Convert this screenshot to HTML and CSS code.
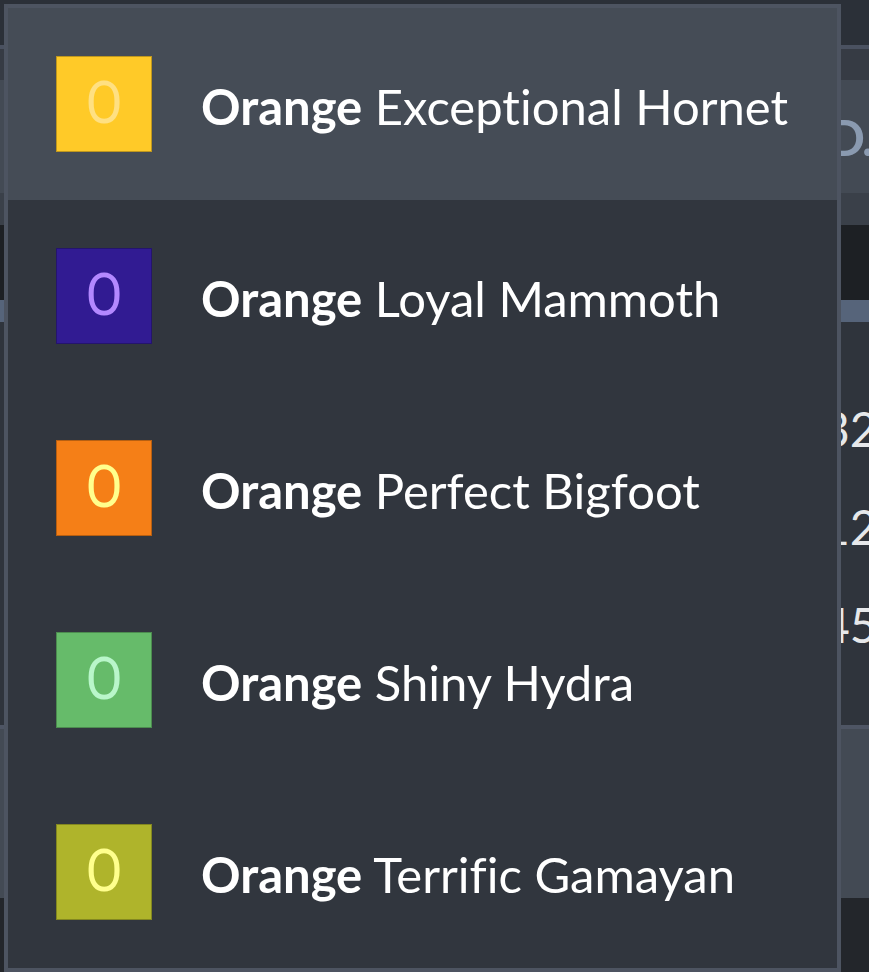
FILE: index.html
```html
<!DOCTYPE html>
<html lang="en">
<head>
<meta charset="utf-8">
<title>Dropdown</title>
<link rel="stylesheet" href="styles.css">
</head>
<body>
<div class="page">
  <div class="topbar"></div>
  <div class="topline"></div>
  <div class="subbar"></div>
  <div class="titlebar"><span class="title">D.</span></div>
  <div class="toolbar"></div>
  <div class="darkbar"></div>
  <div class="headline"></div>
  <div class="tbody">
    <div class="trow"><span class="num">32</span></div>
    <div class="trow"><span class="num">12</span></div>
    <div class="trow"><span class="num">45</span></div>
  </div>
  <div class="footline"></div>
  <div class="footer"></div>
  <div class="bottom"></div>
</div>

<ul class="menu">
  <li class="item active">
    <span class="swatch amber"><span class="glyph">O</span></span>
    <span class="label"><b>Orange</b> Exceptional Hornet</span>
  </li>
  <li class="item">
    <span class="swatch purple"><span class="glyph">O</span></span>
    <span class="label"><b>Orange</b> Loyal Mammoth</span>
  </li>
  <li class="item">
    <span class="swatch orange"><span class="glyph">O</span></span>
    <span class="label"><b>Orange</b> Perfect Bigfoot</span>
  </li>
  <li class="item">
    <span class="swatch green"><span class="glyph">O</span></span>
    <span class="label"><b>Orange</b> Shiny Hydra</span>
  </li>
  <li class="item">
    <span class="swatch lime"><span class="glyph">O</span></span>
    <span class="label"><b>Orange</b> Terrific Gamayan</span>
  </li>
</ul>
</body>
</html>
```

FILE: styles.css
```css
html, body {
  margin: 0;
  padding: 0;
  height: 100%;
  overflow: hidden;
  background: #23262b;
}

body {
  position: relative;
  font-family: "Lato", "Open Sans", sans-serif;
  font-variant-ligatures: none;
}

.page {
  display: flex;
  flex-direction: column;
  width: 100%;
}

.topbar { height: 45px; background: #2b3038; }
.topline { height: 4px; background: #4a5160; }
.subbar { height: 31px; background: #363b44; }
.titlebar {
  height: 113px;
  background: #434a54;
  display: flex;
  align-items: center;
  padding-left: 827px;
  white-space: nowrap;
  overflow: hidden;
}
.title {
  font-weight: 700;
  font-size: 50px;
  letter-spacing: -2px;
  color: #8a9ab0;
}
.toolbar { height: 32px; background: #3a4049; }
.darkbar { height: 75px; background: #1d2024; }
.headline { height: 22px; background: #56647a; }

.tbody {
  background: #2f343c;
  padding: 57px 0 52px;
  display: flex;
  flex-direction: column;
}
.trow {
  height: 98px;
  display: flex;
  align-items: center;
  padding-left: 822px;
  white-space: nowrap;
  overflow: hidden;
}
.num {
  font-size: 48px;
  color: #e6e8ea;
  font-weight: 400;
}

.footline { height: 4px; background: #4e5564; }
.footer { height: 169px; background: #434a54; }
.bottom { height: 80px; background: #23262b; }

.menu {
  position: absolute;
  left: 4px;
  top: 4px;
  width: 829px;
  margin: 0;
  padding: 0;
  list-style: none;
  border: 4px solid #4d5461;
  background: #31363e;
}

.item {
  height: 192px;
  box-sizing: border-box;
  padding: 0 48px;
  display: flex;
  align-items: center;
  gap: 49px;
}
.item.active { background: #454c56; }

.swatch {
  flex: none;
  width: 96px;
  height: 96px;
  box-sizing: border-box;
  border: 1px solid rgba(0, 0, 0, 0.25);
  display: flex;
  align-items: center;
  justify-content: center;
  font-family: "Roboto", sans-serif;
  font-weight: 400;
  font-size: 54px;
  line-height: 1;
}
.glyph {
  display: block;
  transform: scaleY(1.08);
}
.amber { background: #ffca28; color: #ffe082; }
.purple { background: #311b92; color: #b388ff; }
.orange { background: #f57f17; color: #ffff8d; }
.green { background: #66bb6a; color: #b9f6ca; }
.lime { background: #afb42b; color: #ffff8d; }

.label {
  font-size: 49px;
  color: #ffffff;
  white-space: nowrap;
  font-weight: 400;
  padding-top: 4px;
}
.label b { font-weight: 700; }
```
